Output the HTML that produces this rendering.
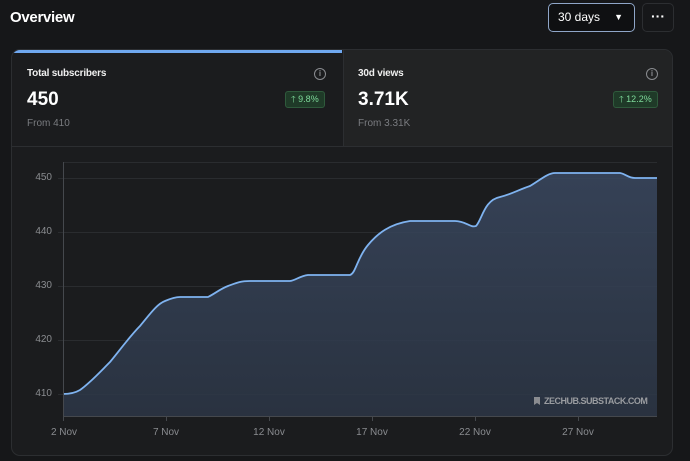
<!DOCTYPE html>
<html><head><style>
body{margin:0;width:690px;height:461px;background:#161719;font-family:"Liberation Sans",sans-serif;position:relative;overflow:hidden;color:#fff}
.a{position:absolute}
.card{left:11px;top:49px;width:660px;height:405px;border:1px solid #2c2e31;border-radius:9px;background:#1b1c1e;overflow:hidden}
.t{font-size:10px;font-weight:bold;color:#f0f0f0;letter-spacing:-0.2px}
.big{font-size:19px;font-weight:bold}
.from{font-size:10px;color:#7a7c80}
.badge{height:15px;border:1px solid #2f5a3c;background:#1f3a28;border-radius:3px;color:#7ed99a;font-size:9px;line-height:15px;padding:0 5px}
.info{width:10px;height:10px;border:1px solid #8a8c90;border-radius:50%;font-size:8px;line-height:10px;text-align:center;color:#8a8c90;font-weight:bold}
.yl{font-size:10px;color:#8a8c90;width:30px;text-align:right;left:22px}
.xl{font-size:10px;color:#8a8c90;top:427px;width:50px;text-align:center}
</style></head><body>
<div class="a" style="left:10px;top:9px;font-size:15px;font-weight:bold;letter-spacing:-0.3px">Overview</div>
<div class="a" style="left:548px;top:3px;width:87px;height:29px;border:1px solid #8fa6c8;border-radius:5px;background:#0f1012;box-sizing:border-box;font-size:12px;line-height:27px;padding-left:9px">30 days<span style="position:absolute;right:11px;top:0;font-size:9px">▼</span></div>
<div class="a" style="left:642px;top:3px;width:32px;height:29px;border:1px solid #2c2e31;border-radius:5px;box-sizing:border-box;text-align:center;line-height:24px;font-size:14px;font-weight:bold">···</div>
<div class="a card">
 <div class="a" style="left:0;top:0;width:330px;height:3px;background:#6fa8f0"></div>
 <div class="a" style="left:331px;top:0;width:329px;height:96px;background:#222324;border-left:1px solid #2c2e31"></div>
 <div class="a" style="left:0;top:96px;width:660px;height:1px;background:#2c2e31"></div>
 <div class="a t" style="left:15px;top:18px">Total subscribers</div>
 <div class="a info" style="left:302px;top:18px">i</div>
 <div class="a big" style="left:15px;top:39px">450</div>
 <div class="a badge" style="left:273px;top:41px">🡑 9.8%</div>
 <div class="a from" style="left:15px;top:68px">From 410</div>
 <div class="a t" style="left:346px;top:18px">30d views</div>
 <div class="a info" style="left:634px;top:18px">i</div>
 <div class="a big" style="left:346px;top:39px">3.71K</div>
 <div class="a badge" style="left:601px;top:41px">🡑 12.2%</div>
 <div class="a from" style="left:346px;top:68px">From 3.31K</div>
</div>
<svg class="a" style="left:0;top:0" width="690" height="461">
<defs><linearGradient id="g" x1="0" y1="0" x2="0" y2="1"><stop offset="0" stop-color="#3a4860"/><stop offset="1" stop-color="#2c3646"/></linearGradient></defs>
<g stroke="#2a2c2f" stroke-width="1">
<line x1="63" y1="162.5" x2="657" y2="162.5"/><line x1="58" y1="178.5" x2="657" y2="178.5"/><line x1="58" y1="232.5" x2="657" y2="232.5"/><line x1="58" y1="286.5" x2="657" y2="286.5"/><line x1="58" y1="340.5" x2="657" y2="340.5"/><line x1="58" y1="394.5" x2="657" y2="394.5"/>
</g>
<path d="M63,394 C70,394 75,393 80,390 C90,383 100,372 110,362 C120,350 130,336 140,326 C150,314 157,304 165,301 C172,298 176,297 180,297 L208,297 C216,293 220,289 228,286 C236,283 240,281 250,281 L290,281 C296,280 300,276 308,275 L350,275 C356,273 357,258 368,245 C378,233 390,224 410,221 L455,221 C466,221 470,228 476,226 C482,220 484,200 500,197 C512,194 518,190 530,186 C540,180 548,173 555,173 L620,173 C626,174 628,178 635,178 L657,178 L657,416 L63,416 Z" fill="url(#g)" opacity="0.85"/>
<path d="M63,394 C70,394 75,393 80,390 C90,383 100,372 110,362 C120,350 130,336 140,326 C150,314 157,304 165,301 C172,298 176,297 180,297 L208,297 C216,293 220,289 228,286 C236,283 240,281 250,281 L290,281 C296,280 300,276 308,275 L350,275 C356,273 357,258 368,245 C378,233 390,224 410,221 L455,221 C466,221 470,228 476,226 C482,220 484,200 500,197 C512,194 518,190 530,186 C540,180 548,173 555,173 L620,173 C626,174 628,178 635,178 L657,178" fill="none" stroke="#7fb3f0" stroke-width="1.8"/>
<g stroke="#45484d" stroke-width="1"><line x1="63.5" y1="162" x2="63.5" y2="421"/><line x1="63" y1="416.5" x2="657" y2="416.5"/>
<line x1="166.5" y1="416" x2="166.5" y2="421"/><line x1="269.5" y1="416" x2="269.5" y2="421"/><line x1="372.5" y1="416" x2="372.5" y2="421"/><line x1="475.5" y1="416" x2="475.5" y2="421"/><line x1="578.5" y1="416" x2="578.5" y2="421"/></g>
<path d="M534,397 h6 v8 l-3,-2 l-3,2 z" fill="#8a8c90"/>
</svg>
<div class="a yl" style="top:172px">450</div><div class="a yl" style="top:226px">440</div><div class="a yl" style="top:280px">430</div><div class="a yl" style="top:334px">420</div><div class="a yl" style="top:388px">410</div>
<div class="a" style="left:544px;top:396px;font-size:9px;color:#9a9ca0;font-weight:bold;letter-spacing:-0.5px">ZECHUB.SUBSTACK.COM</div>
<div class="a xl" style="left:39px">2 Nov</div><div class="a xl" style="left:141px">7 Nov</div><div class="a xl" style="left:244px">12 Nov</div><div class="a xl" style="left:347px">17 Nov</div><div class="a xl" style="left:450px">22 Nov</div><div class="a xl" style="left:553px">27 Nov</div>
</body></html>
